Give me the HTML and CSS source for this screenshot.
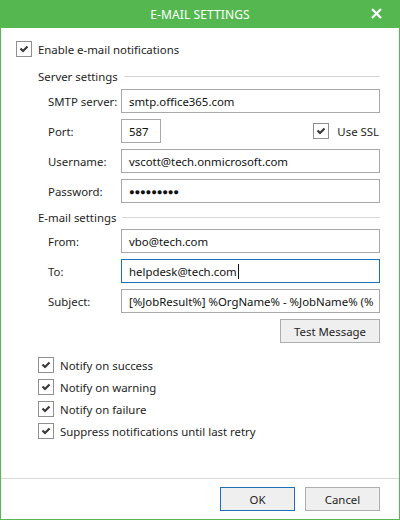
FILE: index.html
```html
<!DOCTYPE html>
<html lang="en">

<head>
  <meta charset="UTF-8" />
  <title>E-mail Settings</title>
  <link rel="stylesheet" href="styles.css">
</head>

<body>
  <div class="window">
    <div class="titlebar">
      <span class="title">E-MAIL SETTINGS</span>
      <svg class="close" width="11" height="11" viewBox="0 0 11 11">
        <path d="M1 1 L10 10 M10 1 L1 10" stroke="#fff" stroke-width="2.2" />
      </svg>
    </div>

    <div class="content">
      <label class="check-row">
        <span class="checkbox"><svg width="14" height="14" viewBox="0 0 14 14"><path d="M3.5 6.5 L6 9 L10.5 4.5" fill="none" stroke="#3a3a3a" stroke-width="2.2" /></svg></span>
        Enable e-mail notifications
      </label>

      <div class="legend server-legend">Server settings</div>
      <div class="form-grid">
        <span class="label">SMTP server:</span>
        <div class="field">smtp.office365.com</div>

        <span class="label">Port:</span>
        <div class="port-row">
          <div class="field port">587</div>
          <label class="check-row ssl">
            <span class="checkbox"><svg width="14" height="14" viewBox="0 0 14 14"><path d="M3.5 6.5 L6 9 L10.5 4.5" fill="none" stroke="#3a3a3a" stroke-width="2.2" /></svg></span>
            Use SSL
          </label>
        </div>

        <span class="label">Username:</span>
        <div class="field">vscott@tech.onmicrosoft.com</div>

        <span class="label">Password:</span>
        <div class="field password">&#9679;&#9679;&#9679;&#9679;&#9679;&#9679;&#9679;&#9679;&#9679;</div>
      </div>

      <div class="legend mail-legend">E-mail settings</div>
      <div class="form-grid">
        <span class="label">From:</span>
        <div class="field">vbo@tech.com</div>

        <span class="label">To:</span>
        <div class="field focused">helpdesk@tech.com<span class="caret"></span></div>

        <span class="label">Subject:</span>
        <div class="field subject"><span>[%JobResult%] %OrgName% - %JobName% (%</span></div>
      </div>

      <div class="test-row">
        <button class="btn test-btn">Test Message</button>
      </div>

      <div class="notify-list">
        <label class="check-row">
          <span class="checkbox"><svg width="14" height="14" viewBox="0 0 14 14"><path d="M3.5 6.5 L6 9 L10.5 4.5" fill="none" stroke="#3a3a3a" stroke-width="2.2" /></svg></span>
          Notify on success
        </label>
        <label class="check-row">
          <span class="checkbox"><svg width="14" height="14" viewBox="0 0 14 14"><path d="M3.5 6.5 L6 9 L10.5 4.5" fill="none" stroke="#3a3a3a" stroke-width="2.2" /></svg></span>
          Notify on warning
        </label>
        <label class="check-row">
          <span class="checkbox"><svg width="14" height="14" viewBox="0 0 14 14"><path d="M3.5 6.5 L6 9 L10.5 4.5" fill="none" stroke="#3a3a3a" stroke-width="2.2" /></svg></span>
          Notify on failure
        </label>
        <label class="check-row">
          <span class="checkbox"><svg width="14" height="14" viewBox="0 0 14 14"><path d="M3.5 6.5 L6 9 L10.5 4.5" fill="none" stroke="#3a3a3a" stroke-width="2.2" /></svg></span>
          Suppress notifications until last retry
        </label>
      </div>
    </div>

    <div class="footer">
      <button class="btn primary">OK</button>
      <button class="btn">Cancel</button>
    </div>
  </div>
</body>

</html>
```

FILE: styles.css
```css
/* Base */
* {
  box-sizing: border-box;
  margin: 0;
  padding: 0;
}

body {
  font-family: 'Noto Sans', 'Open Sans', sans-serif;
  font-size: 11.4px;
  color: #1e1e1e;
  background: #fff;
}

.window {
  width: 400px;
  height: 520px;
  border: 1px solid #55b74f;
  border-top: none;
  display: flex;
  flex-direction: column;
  background: #fff;
}

/* Title bar */
.titlebar {
  height: 28px;
  margin: 0 -1px;
  background-color: #55b74f;
  color: #fff;
  display: flex;
  align-items: center;
  justify-content: center;
  position: relative;
}

.title {
  font-size: 12px;
  letter-spacing: 0.1px;
}

.close {
  position: absolute;
  right: 18px;
  top: 8px;
}

/* Content */
.content {
  padding: 13px 19px 0 15px;
  display: flex;
  flex-direction: column;
}

.check-row {
  display: flex;
  align-items: center;
  height: 16px;
  gap: 6px;
  white-space: nowrap;
}

.checkbox {
  width: 16px;
  height: 16px;
  border: 1px solid #8f8f8f;
  background: #fff;
  display: flex;
  align-items: center;
  justify-content: center;
  flex-shrink: 0;
}

/* Group headings */
.legend {
  display: flex;
  align-items: center;
  height: 16px;
  padding-left: 22px;
  white-space: nowrap;
}

.legend::after {
  content: '';
  flex: 1;
  height: 1px;
  background-color: #d7d7d7;
  margin-left: 6px;
}

.server-legend {
  margin-top: 11px;
}

.mail-legend {
  margin-top: 6px;
}

.form-grid {
  display: grid;
  grid-template-columns: 73px 1fr;
  row-gap: 6px;
  margin-top: 4px;
  padding-left: 32px;
}

.server-legend + .form-grid {
  margin-top: 5px;
}

.label {
  display: flex;
  align-items: center;
  height: 24px;
  white-space: nowrap;
}

.field {
  height: 24px;
  border: 1px solid #a8a8a8;
  padding: 0 7px;
  display: flex;
  align-items: center;
  white-space: nowrap;
  overflow: hidden;
  color: #111;
}

.field.focused {
  border-color: #1c6fb8;
}

.subject {
  padding-right: 0;
}

.caret {
  display: inline-block;
  width: 1px;
  height: 15px;
  background: #111;
  margin-left: 1px;
}

.password {
  font-size: 9.5px;
  letter-spacing: -0.2px;
}

.port-row {
  display: flex;
  align-items: center;
  justify-content: space-between;
}

.port {
  width: 40px;
}

.ssl {
  gap: 8px;
  padding-right: 1px;
}

/* Buttons */
.btn {
  font-family: inherit;
  font-size: 11.4px;
  color: #1e1e1e;
  height: 24px;
  width: 75px;
  background-color: #efefef;
  border: 1px solid #adadad;
}

.btn.primary {
  border-color: #1c6fb8;
}

.test-row {
  display: flex;
  justify-content: flex-end;
  margin-top: 6px;
}

.test-btn {
  width: 100px;
}

.notify-list {
  display: flex;
  flex-direction: column;
  gap: 6px;
  margin-top: 14px;
  padding-left: 22px;
}

/* Footer */
.footer {
  margin-top: auto;
  border-top: 1px solid #d9d9d9;
  padding: 8px 19px 8px 0;
  display: flex;
  justify-content: flex-end;
  gap: 10px;
}
```
